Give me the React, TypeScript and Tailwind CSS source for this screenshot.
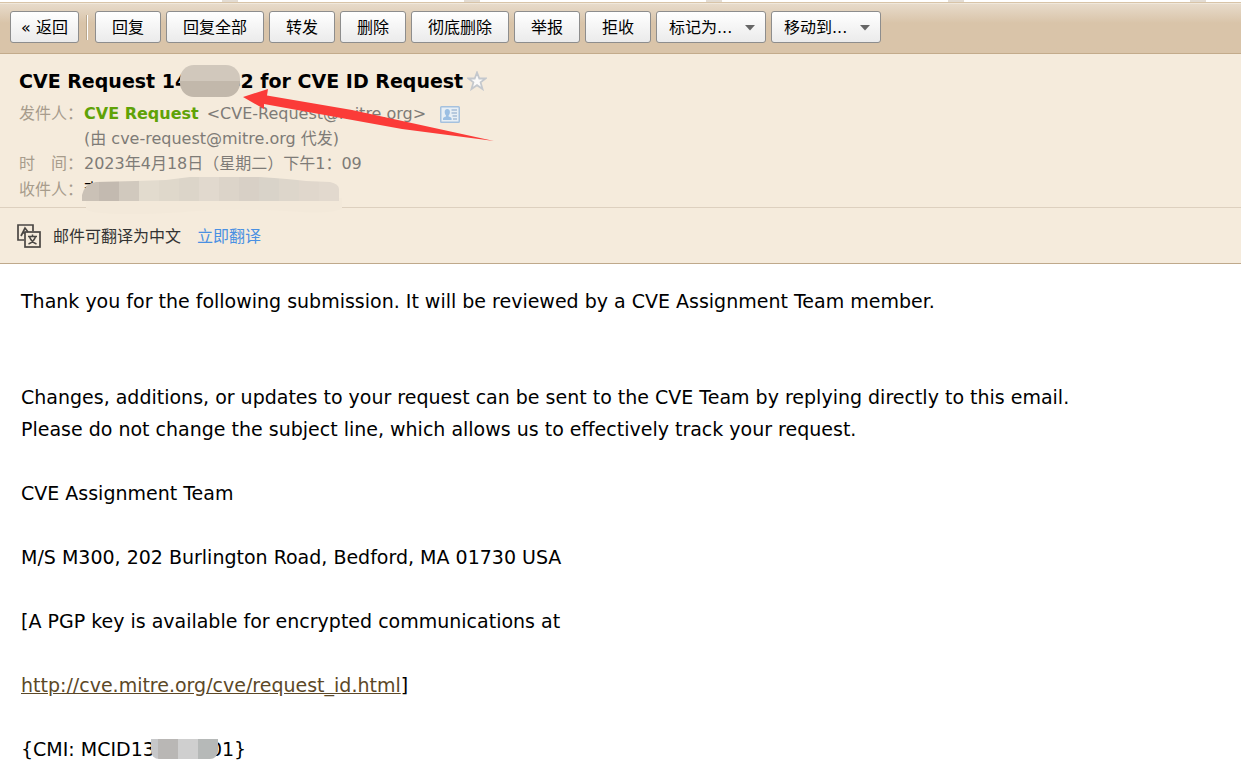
import React from 'react';

const actions = ['回复', '回复全部', '转发', '删除', '彻底删除', '举报', '拒收'];
const menus = [
    { label: '标记为...', name: 'mark' },
    { label: '移动到...', name: 'move' },
];
const tabMarks = [0, 1, 2, 3, 4];

const buttonStyle =
    'h-8 shrink-0 rounded-[3px] border border-[#8d8d8d] bg-linear-to-b from-white to-[#ebebeb] pt-[2px] text-base leading-none text-black';

const Toolbar: React.FC = () => (
    <div className="flex h-[52px] items-start gap-[5px] border-y border-t-[#d8c4a8] border-b-[#c3ab8b] bg-linear-to-b from-[#e8dccc] via-[#d9c4a9] via-40% to-[#d9c4a9] pt-2 pl-[10px] shadow-[inset_0_1px_0_#f0e8dc]">
        <button className={`${buttonStyle} px-[10px]`}>« 返回</button>
        <div className="mx-[2px] mt-1 h-[25px] w-[2px] shrink-0 border-l border-[#b9a78d] bg-white" />
        {actions.map(action => (
            <button key={action} className={`${buttonStyle} px-4`}>{action}</button>
        ))}
        {menus.map(menu => (
            <div key={menu.name} className="relative shrink-0">
                <select
                    name={menu.name}
                    aria-label={menu.label}
                    className={`${buttonStyle} w-[110px] appearance-none pl-3`}
                >
                    <option>{menu.label}</option>
                </select>
                <svg className="pointer-events-none absolute top-[14px] right-[11px]" width="10" height="6" viewBox="0 0 10 6">
                    <path d="M0 0h10L5 5.5z" fill="#666" />
                </svg>
            </div>
        ))}
    </div>
);

const StarIcon: React.FC = () => (
    <svg className="block" width="20" height="20" viewBox="0 0 20 20">
        <path
            d="M10 1.500l2.300 6h6.300l-5 3.900 1.900 6.600-5.500-3.800L4.500 18l1.900-6.600-5-3.900h6.300z"
            fill="#fbfaf9"
            stroke="#c4c8cd"
            strokeWidth="1.800"
        />
    </svg>
);

const CardIcon: React.FC = () => (
    <svg className="block" width="20" height="17" viewBox="0 0 20 17">
        <rect x=".75" y=".75" width="18.500" height="15.500" rx=".8" fill="#e8eff5" stroke="#a5c1de" strokeWidth="1.500" />
        <path d="M3 14v-1.500c0-1.300 2-1.600 3-2.100v-1C5.200 8.700 4.700 7.500 4.700 6c0-1.800 1-3 2.600-3s2.600 1.200 2.600 3c0 1.500-.5 2.700-1.300 3.400v1c1 .5 3 .8 3 2.100V14z" fill="#9cbfe3" />
        <path d="M11.500 4h5.500M11.500 7h5.500M12.500 10h4.500M13 13h4" stroke="#a5bdd6" strokeWidth="1.300" />
    </svg>
);

const TranslateIcon: React.FC = () => (
    <svg width="24" height="24" viewBox="0 0 24 24" fill="none" stroke="#4a4744" strokeWidth="1.700">
        <path d="M7 16H1V1h15v6" />
        <path d="M4 12l4-8 3 4M6 9h2" />
        <rect x="8" y="8" width="15" height="15" />
        <path d="M11 12.500h9M15.500 10.500v2M18.500 12.500c-.8 3.500-3.500 6-7 7.500M12.500 12.500c.8 3.500 3.500 6 7 7.500" strokeWidth="1.500" />
    </svg>
);

const recipientCells = [
    '#cac1b6', '#c3bab0', '#d1c9be', '#e2dbce', '#dfd8cb', '#dcd5c9', '#e1d9ce',
    '#dcd4c9', '#d8d0c6', '#d9d3c9', '#ddd6cb', '#e0d7cc', '#e2d9ce',
];

const RecipientMask: React.FC = () => (
    <svg className="absolute -top-[12px] -left-[2px]" width="262" height="38" viewBox="0 0 262 38">
        <path d="M4 22h256v11q-14 5-40 3-60-4-106-1-60 5-94 2-16-1-16-5z" fill="#f3e9da" />
        <clipPath id="recipient">
            <path d="M0 25v-6q3-12 14-13l40-1 30-1 24-3h70q30 2 46 4l24 1q9 2 9 7v12z" />
        </clipPath>
        <g clipPath="url(#recipient)">
            {recipientCells.map((color, i) => (
                <rect key={i} x={i * 20 - 3} y="0" width="20" height="25" fill={color} />
            ))}
        </g>
    </svg>
);

const MailHeader: React.FC = () => (
    <header className="relative border-b border-[#ddd0bf] bg-[#f5ebdc] px-[19px] pt-[11px] pb-1">
        <div className="flex items-center gap-1">
            <h1 className="flex items-center text-[19px] leading-[26px] font-bold whitespace-pre text-black">
                CVE Request 14
                <span className="relative -mr-[13px] -ml-2 h-8 w-[60px] rounded-[14px] bg-linear-to-b from-[#d1c8bc] from-50% to-[#c2b8ab] to-50%" />
                <span>42 for CVE ID Request</span>
            </h1>
            <button aria-label="星标"><StarIcon /></button>
        </div>
        <dl className="grid grid-cols-[65px_1fr] pt-1 text-base leading-[26px] text-[#7e7b77]">
            <dt className="text-[#a79c8c]">发件人：</dt>
            <dd>
                <div className="flex items-center">
                    <b className="text-[#5fa207]">CVE Request</b>
                    <span className="ml-2">&lt;CVE-Request@mitre.org&gt;</span>
                    <button aria-label="联系人" className="ml-[14px]"><CardIcon /></button>
                </div>
                <div className="leading-6">(由 cve-request@mitre.org 代发)</div>
            </dd>
            <dt className="text-[#a79c8c]">时　间：</dt>
            <dd>2023年4月18日（星期二）下午1：09</dd>
            <dt className="text-[#a79c8c]">收件人：</dt>
            <dd className="relative text-black">
                李
                <span className="absolute top-[11px] left-0"><RecipientMask /></span>
            </dd>
        </dl>
        <svg className="absolute top-[32px] left-[242px]" width="256" height="58" viewBox="0 0 256 58">
            <path d="M1 11L26 3l-1 6.500L110 24l142 31-92-12L22 18v5z" fill="#fb3b38" />
        </svg>
    </header>
);

const App: React.FC = () => (
    <div className="font-['DejaVu_Sans','Noto_Sans_CJK_SC',sans-serif]">
        <div className="flex h-[2px] gap-[226px] overflow-hidden bg-white pl-[222px]">
            {tabMarks.map(i => <span key={i} className="w-4 shrink-0 bg-[#e3dcd3]" />)}
        </div>
        <Toolbar />
        <MailHeader />
        <div className="flex h-14 items-center border-b border-[#bfa98b] bg-[#f5ebdc] pl-[17px] text-base text-[#333]">
            <TranslateIcon />
            <span className="ml-3 pt-[2px]">邮件可翻译为中文</span>
            <a href="#" className="ml-4 pt-[2px] text-[#4a90e2]">立即翻译</a>
        </div>
        <main className="space-y-8 bg-white px-[21px] pt-[21px] pb-3 text-[19px] leading-8 text-black">
            <p>Thank you for the following submission. It will be reviewed by a CVE Assignment Team member.</p>
            <p className="pt-8">
                Changes, additions, or updates to your request can be sent to the CVE Team by replying directly to this email.
                <br />
                Please do not change the subject line, which allows us to effectively track your request.
            </p>
            <p>CVE Assignment Team</p>
            <p>M/S M300, 202 Burlington Road, Bedford, MA 01730 USA</p>
            <p>[A PGP key is available for encrypted communications at</p>
            <p>
                <a href="http://cve.mitre.org/cve/request_id.html" className="text-[#5c4827] underline">http://cve.mitre.org/cve/request_id.html</a>]
            </p>
            <p className="flex items-center">
                {'{CMI: MCID13'}
                <span className="relative -mr-2 -ml-1 flex h-5 w-[67px] overflow-hidden rounded-b-[8px]">
                    <span className="w-[7px] bg-[#c6c7c9]" />
                    <span className="w-5 bg-[#b9b7b5]" />
                    <span className="w-5 bg-[#cfcfcf]" />
                    <span className="w-5 bg-[#b6b9b8]" />
                </span>
                <span>01{'}'}</span>
            </p>
        </main>
    </div>
);

export default App;
